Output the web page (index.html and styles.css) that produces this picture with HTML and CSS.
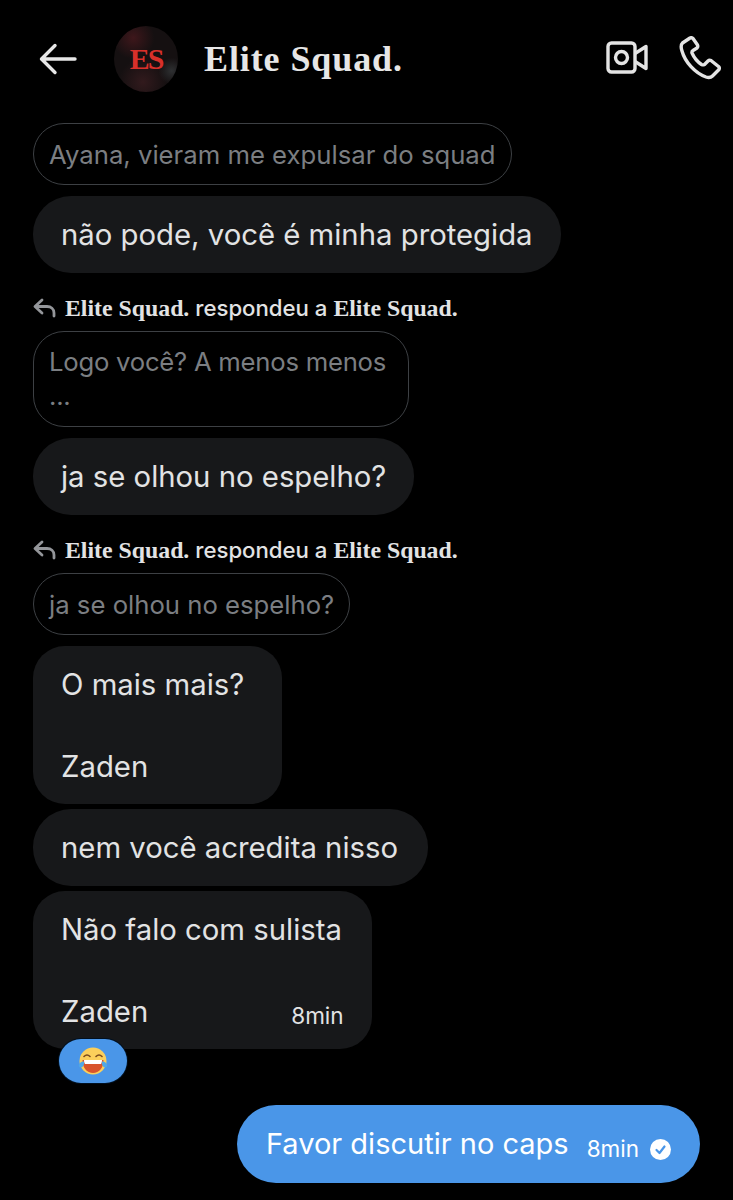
FILE: index.html
```html
<!DOCTYPE html>
<html lang="pt"><head>
<meta charset="utf-8">
<meta name="viewport" content="width=device-width, initial-scale=1">
<title>Elite Squad.</title>
<link rel="stylesheet" href="styles.css"></head>

<body>
<header class="topbar">
	<svg class="back" width="38" height="32" viewBox="0 0 38 32" fill="none" stroke="#e7e7e7" stroke-width="3.4" stroke-linecap="round" stroke-linejoin="round"><path d="M36 16H3M16 2.500L2.500 16L16 29.500"/></svg>
	<div class="avatar"><span>ES</span></div>
	<div class="name">Elite Squad.</div>
	<svg class="video" width="42" height="34" viewBox="0 0 42 34" fill="none" stroke="#e4e4e4" stroke-width="3.400" stroke-linejoin="round"><rect x="2" y="2" width="27" height="29" rx="3.500"/><circle cx="15.500" cy="16.500" r="6"/><path d="M29 12.500L40 5.500V27.500L29 20.500"/></svg>
	<svg class="phone" width="42" height="44" viewBox="0 0 42 44" fill="none" stroke="#e4e4e4" stroke-width="3.400" stroke-linejoin="round"><path d="M11 2L3.500 7C1.500 9 2 12 3 15C6 26 16 37 27 41C30 42 32 41.500 33.500 40L40 33.500C40.500 32.500 40.500 31.500 39.500 30.500L32 24.500C31 24 30 24 29 25L25.500 28.500C24.500 29 23.500 29 22.500 28.500C18 25.500 15 21.500 13 17C12.800 16 13 15 14 14.500L18 12C18.800 11 19 10 18.500 9L14 2.500C13 1.500 12 1.500 11 2Z"/></svg>
</header>

<main class="chat">
	<div class="quote">Ayana, vieram me expulsar do squad</div>
	<div class="bubble">não pode, você é minha protegida</div>

	<div class="reply"><svg width="23" height="20" viewBox="0 0 23 20" fill="none" stroke="#94969a" stroke-width="2.800" stroke-linecap="round" stroke-linejoin="round"><path d="M9 2L2 8.500L9 15M2.500 8.500H14C18 8.500 21 11 21 15V18"/></svg><span><b>Elite Squad.</b> respondeu a <b>Elite Squad.</b></span></div>
	<div class="quote quote-wide">Logo você? A menos menos<br>...</div>
	<div class="bubble">ja se olhou no espelho?</div>

	<div class="reply"><svg width="23" height="20" viewBox="0 0 23 20" fill="none" stroke="#94969a" stroke-width="2.800" stroke-linecap="round" stroke-linejoin="round"><path d="M9 2L2 8.500L9 15M2.500 8.500H14C18 8.500 21 11 21 15V18"/></svg><span><b>Elite Squad.</b> respondeu a <b>Elite Squad.</b></span></div>
	<div class="quote">ja se olhou no espelho?</div>
	<div class="bubble tall roomy">O mais mais?<br><br>Zaden</div>
	<div class="bubble near wider">nem você acredita nisso</div>
	<div class="bubble near tall last">Não falo com sulista<br><br>Zaden<span class="time">8min</span>
		<div class="reaction"><svg width="30" height="30" viewBox="0 0 30 30">
			<circle cx="15" cy="15" r="13.500" fill="#fbcf5b"/>
			<path d="M6 10.500Q9 7.500 12 10.500M18 10.500Q21 7.500 24 10.500" fill="none" stroke="#7a4a1c" stroke-width="1.600" stroke-linecap="round"/>
			<path d="M4.500 14H25.500C25.500 22 21 27 15 27C9 27 4.500 22 4.500 14Z" fill="#d9542b"/>
			<path d="M6 14H24C24 16 23.500 17 23 18H7C6.500 17 6 16 6 14Z" fill="#fff"/>
			<path d="M0.800 19.500C1.500 16.500 4 15 6 15.500C6.500 18 5.500 21 3 21.500C1.800 21.500 0.800 20.800 0.800 19.500ZM29.200 19.500C28.500 16.500 26 15 24 15.500C23.500 18 24.500 21 27 21.500C28.200 21.500 29.200 20.800 29.200 19.500Z" fill="#4fa8e8"/>
		</svg></div>
	</div>

	<div class="bubble mine">Favor discutir no caps<span class="time">8min</span><svg class="check" width="21" height="21" viewBox="0 0 21 21"><circle cx="10.500" cy="10.500" r="10.500" fill="#fff"/><path d="M6.500 11L9.500 14L14.500 7.500" fill="none" stroke="#4a96e8" stroke-width="2.200" stroke-linecap="round" stroke-linejoin="round"/></svg></div>
</main>
</body>
</html>
```

FILE: styles.css
```css
/* page: black, all text in one sans */
body {
	margin: 0;
	background-color: #000000;
	color: #e2e3e4;
	font-family: "Inter", "Liberation Sans", sans-serif;
	overflow: hidden;
}

/* top bar */
.topbar {
	display: flex;
	align-items: center;
	height: 117px;
	padding-left: 39px;
	box-sizing: border-box;
}
.back {
	flex: none;
}
.avatar {
	flex: none;
	display: flex;
	align-items: center;
	justify-content: center;
	width: 64px;
	height: 66px;
	margin-left: 37px;
	border-radius: 50%;
	background:
		radial-gradient(circle at 30% 18%, #3e171b 0, rgba(62,23,27,0) 30%),
		radial-gradient(circle at 90% 68%, #2e3032 0, rgba(46,48,50,0) 18%),
		radial-gradient(circle at 45% 85%, #321a1d 0, rgba(50,26,29,0) 36%),
		#151011;
}
.avatar span {
	color: #d8302a;
	font-family: "Liberation Serif", serif;
	font-weight: bold;
	font-size: 30px;
	letter-spacing: -2px;
}
.name {
	flex: none;
	margin-left: 26px;
	font-family: "Liberation Serif", serif;
	font-weight: bold;
	font-size: 36px;
	letter-spacing: .9px;
	color: #e6e6e6;
}
.video {
	flex: none;
	margin-left: auto;
	margin-top: -2px;
}
.phone {
	flex: none;
	margin-left: 31px;
	margin-right: 12px;
	margin-top: -1px;
}

/* message list */
.chat {
	display: flex;
	flex-direction: column;
	align-items: flex-start;
	padding: 6px 33px 0 33px;
}
.quote {
	border: 1.500px solid #3d4044;
	border-radius: 31px;
	padding: 12.500px 15px 12.500px 15px;
	font-size: 25.700px;
	line-height: 35px;
	color: #7b7e82;
	white-space: nowrap;
}
.quote-wide {
	line-height: 34.500px;
	letter-spacing: -.25px;
	padding-right: 22px;
}
.bubble {
	position: relative;
	margin-top: 11px;
	padding: 18px 28px;
	border-radius: 38px;
	background-color: #17181a;
	font-size: 29.300px;
	line-height: 41px;
	white-space: nowrap;
}
.near {
	margin-top: 5px;
}
.wider {
	padding-right: 30px;
}
.tall {
	border-radius: 32px;
	padding-bottom: 17px;
}
.roomy {
	padding-right: 38px;
}
.last .time {
	margin-left: 143px;
}
.time {
	font-size: 22.500px;
	line-height: 1;
	vertical-align: -2px;
}

.reply {
	display: flex;
	align-items: center;
	gap: 9px;
	height: 24px;
	margin-top: 23px;
	margin-bottom: 11px;
	font-size: 22.200px;
	font-weight: 500;
	white-space: nowrap;
}
.reply b {
	font-family: "Liberation Serif", serif;
	font-size: 23.800px;
}

/* emoji reaction sits over the bubble's bottom edge */
.reaction {
	position: absolute;
	left: 26px;
	bottom: -34px;
	display: flex;
	align-items: center;
	justify-content: center;
	width: 68px;
	height: 44px;
	border-radius: 22px;
	background-color: #4a96e8;
	box-shadow: 0 0 0 1px #001020;
}

.mine {
	display: flex;
	align-items: center;
	align-self: flex-end;
	margin-top: 56px;
	padding: 18px 29px 19px 29px;
	border-radius: 39px;
	background-color: #4a96e8;
	color: #ffffff;
	font-size: 29px;
}
.mine .time {
	margin-left: 18px;
	margin-top: 12px;
}
.check {
	flex: none;
	margin-left: 11px;
	margin-top: 12px;
}
```
